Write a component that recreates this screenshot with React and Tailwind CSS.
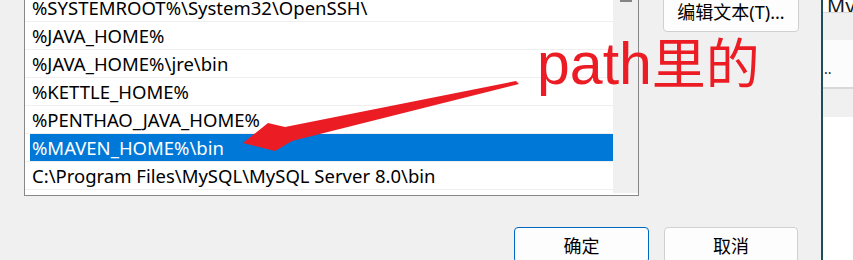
import React from "react";

const paths = [
  "%SYSTEMROOT%\\System32\\OpenSSH\\",
  "%JAVA_HOME%",
  "%JAVA_HOME%\\jre\\bin",
  "%KETTLE_HOME%",
  "%PENTHAO_JAVA_HOME%",
  "%MAVEN_HOME%\\bin",
  "C:\\Program Files\\MySQL\\MySQL Server 8.0\\bin",
];

const SELECTED = 5;

const uiFont = "font-['Noto_Sans','Noto_Sans_CJK_SC',sans-serif]";

const App = () => {
  return (
    <div className={`relative w-[853px] h-[260px] overflow-hidden bg-[#f0f0f0] flex ${uiFont}`}>
      {/* dialog body */}
      <div className="w-[821px] shrink-0 flex flex-col">
        <div className="flex items-start">
          {/* path list */}
          <div className="ml-[24px] w-[615px] h-[196px] shrink-0 border-x border-b border-[#888888] bg-white flex overflow-hidden">
            <div className="flex-1 min-w-0 flex flex-col -mt-[6px]">
              {paths.map((p, i) => (
                <div key={i} className="h-[28px] shrink-0 flex border-b border-[#efefef]">
                  <div
                    className={`ml-[5px] flex-1 flex items-center pl-[2px] text-[18.5px] whitespace-nowrap ${
                      i === SELECTED ? "bg-[#0078d7] text-white" : "text-black"
                    }`}
                  >
                    {p}
                  </div>
                </div>
              ))}
            </div>
            {/* scrollbar */}
            <div className="w-[25px] h-[193px] shrink-0 bg-[#f0f0f0] flex justify-center">
              <div className="w-[12px] h-[2px] bg-[#858585]" />
            </div>
          </div>

          <button className="ml-[24px] -mt-px w-[136px] h-[33px] shrink-0 pb-[6px] flex items-center justify-center rounded-b-[4px] border border-[#d0d0d0] bg-[#fdfdfd] text-[18px] text-black">
            编辑文本(T)...
          </button>
        </div>

        <div className="mt-[31px] ml-[514px] flex gap-[15px]">
          <button className="w-[135px] h-[36px] pt-[3px] flex items-center justify-center rounded-[4px] border border-[#0067c0] bg-[#fdfdfd] text-[18px] text-black">
            确定
          </button>
          <button className="w-[134px] h-[36px] pt-[3px] flex items-center justify-center rounded-[4px] border border-[#d0d0d0] bg-[#fdfdfd] text-[18px] text-black">
            取消
          </button>
        </div>
      </div>

      {/* neighbouring window edge */}
      <div className="w-[2px] shrink-0 h-full bg-[#1d4e5b]" />
      <div className="flex-1 min-w-0 flex flex-col bg-white">
        <div className="h-[12px] overflow-hidden flex items-end pl-[4px] text-[20px] leading-none text-[#1a1a1a] whitespace-nowrap">
          <span className="-mb-[4px]">MySQL</span>
        </div>
        <div className="h-px bg-[#d8d8d8]" />
        <div className="h-[27px] bg-[#f0f0f0]" />
        <div className="h-[47px] bg-[#fcfcfc] pl-[1px] pt-[22px] text-[14px] leading-none text-[#1a1a1a]">
          ..
        </div>
        <div className="h-[2px] bg-[#d8d8d8]" />
        <div className="h-[28px] bg-[#f0f0f0]" />
      </div>

      {/* annotation */}
      <svg className="absolute left-0 top-0" width="853" height="260" viewBox="0 0 853 260">
        <polygon
          points="243,143 268,123 285,127 516,81 519,84 292,141 275,151"
          fill="#ec1c24"
        />
      </svg>
      <div className="absolute left-[537px] top-[34px] leading-none whitespace-nowrap text-[#ec1c24]">
        <span className="font-['Liberation_Sans',sans-serif] text-[59px]">path</span>
        <span className="font-['Noto_Sans_CJK_SC',sans-serif] text-[54px]">里的</span>
      </div>
    </div>
  );
};

export default App;
